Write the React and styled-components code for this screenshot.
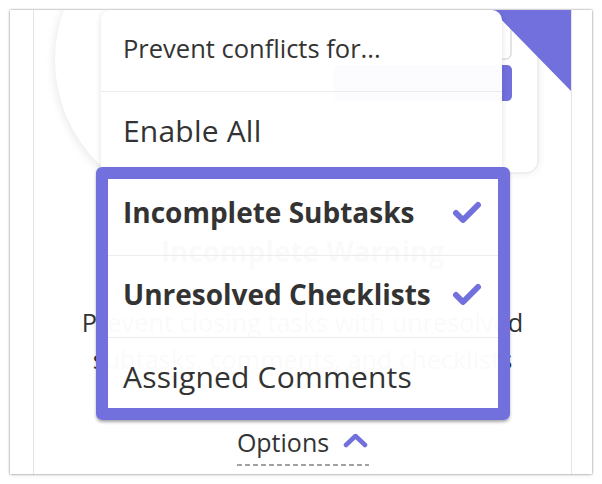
import React from 'react'
import styled, { createGlobalStyle } from 'styled-components'

const Purple = '#7270dc'
const Ink = '#333333'

const GlobalStyle = createGlobalStyle`
  html, body {
    margin: 0;
    padding: 0;
    background: #fff;
  }
  body {
    font-family: "Open Sans", "Liberation Sans", sans-serif;
    color: ${Ink};
  }
`

function Check() {
  return (
    <svg width="32" height="24" viewBox="0 0 32 24">
      <path d="M5 13 L12 20 L27 5" fill="none" stroke={Purple} strokeWidth="6" strokeLinecap="round" strokeLinejoin="round" />
    </svg>
  )
}

function ChevronUp() {
  return (
    <svg width="25" height="15" viewBox="0 0 25 15">
      <path d="M3 12 L12.5 3 L22 12" fill="none" stroke={Purple} strokeWidth="4.5" strokeLinecap="round" strokeLinejoin="round" />
    </svg>
  )
}

// background artwork behind the dropdown
function Illustration() {
  return (
    <Art width="537" height="190" viewBox="0 0 537 190">
      <defs>
        <filter id="soft" x="-20%" y="-20%" width="140%" height="140%">
          <feGaussianBlur stdDeviation="5" />
        </filter>
      </defs>
      <circle cx="166" cy="52" r="146" fill="#000" opacity="0.09" filter="url(#soft)" />
      <circle cx="166" cy="50" r="145" fill="#fff" />
      <rect x="240" y="-20" width="264" height="183" rx="12" fill="#000" opacity="0.08" filter="url(#soft)" />
      <rect x="240" y="-20" width="264" height="183" rx="12" fill="#fff" stroke="#e3e3e3" />
      <rect x="266" y="-6" width="211" height="55" rx="5" fill="#fff" stroke="#c9c9c9" />
      <rect x="300" y="55" width="178" height="36" rx="5" fill={Purple} />
      <polygon points="458,0 537,0 537,81" fill={Purple} />
    </Art>
  )
}

function App() {
  return (
    <Page>
      <GlobalStyle />
      <Frame>
        <Modal>
          <Illustration />
          <Heading>Incomplete Warning</Heading>
          <Text>
            Prevent closing tasks with unresolved
            <br />
            subtasks, comments, and checklists
          </Text>
          <Toggle>
            <span>Options</span>
            <ChevronUp />
          </Toggle>
          <Underline />

          <Menu>
            <Row small>Prevent conflicts for...</Row>
            <Row>Enable All</Row>
            <Row bold>
              Incomplete Subtasks
              <Check />
            </Row>
            <Row bold>
              Unresolved Checklists
              <Check />
            </Row>
            <Row>Assigned Comments</Row>
            <Highlight />
          </Menu>
        </Modal>
      </Frame>
    </Page>
  )
}

const Page = styled.div`
  width: 602px;
  height: 484px;
  box-sizing: border-box;
  padding: 10px;
  overflow: hidden;
`
const Frame = styled.div`
  width: 582px;
  height: 464px;
  box-sizing: border-box;
  padding: 0 20px 0 23px;
  background: #fff;
  box-shadow: 0 0 2px rgba(0, 0, 0, 0.45), 0 1px 4px rgba(0, 0, 0, 0.12);
`
const Modal = styled.div`
  position: relative;
  height: 100%;
  display: flex;
  flex-direction: column;
  align-items: center;
  border-left: 1px solid #e4e4e4;
  border-right: 1px solid #e4e4e4;
  overflow: hidden;
`
const Art = styled.svg`
  display: block;
  flex-shrink: 0;
`
const Heading = styled.h2`
  margin: 33px 0 0;
  font-size: 28px;
  line-height: 36px;
  font-weight: 700;
  color: ${Ink};
`
const Text = styled.p`
  margin: 35px 0 0;
  font-size: 25.3px;
  line-height: 37px;
  text-align: center;
  color: ${Ink};
`
const Toggle = styled.div`
  margin-top: 49px;
  display: flex;
  align-items: center;
  gap: 14px;
  font-size: 25px;
  line-height: 30px;
  color: ${Ink};
  svg {
    margin-top: -4px;
  }
`
const Underline = styled.div`
  margin-top: 7px;
  width: 132px;
  height: 2px;
  background: repeating-linear-gradient(90deg, #a3a3a3 0 5px, transparent 5px 8px);
`
const Menu = styled.div`
  position: absolute;
  left: 67px;
  top: 0;
  width: 401px;
  border-radius: 10px 10px 0 0;
  box-shadow: 0 1px 6px rgba(0, 0, 0, 0.12);
`
const Row = styled.div`
  height: 81px;
  box-sizing: border-box;
  padding: 0 19px 5px 22px;
  display: flex;
  align-items: center;
  justify-content: space-between;
  background: rgba(255, 255, 255, 0.975);
  font-size: ${p => (p.small ? '25.5px' : p.bold ? '28px' : '30px')};
  font-weight: ${p => (p.bold ? 700 : 400)};
  letter-spacing: ${p => (p.small || p.bold ? '0' : '0.2px')};
  color: ${Ink};
  white-space: nowrap;
  & + & {
    height: 82px;
    border-top: 1px solid #ececec;
  }
  &:first-child {
    border-radius: 10px 10px 0 0;
  }
`
const Highlight = styled.div`
  position: absolute;
  left: -5px;
  top: 157px;
  width: 414px;
  height: 253px;
  box-sizing: border-box;
  border: 12px solid ${Purple};
  border-radius: 6px;
  box-shadow: 0 2px 3px rgba(0, 0, 0, 0.3);
  pointer-events: none;
`

export default App
